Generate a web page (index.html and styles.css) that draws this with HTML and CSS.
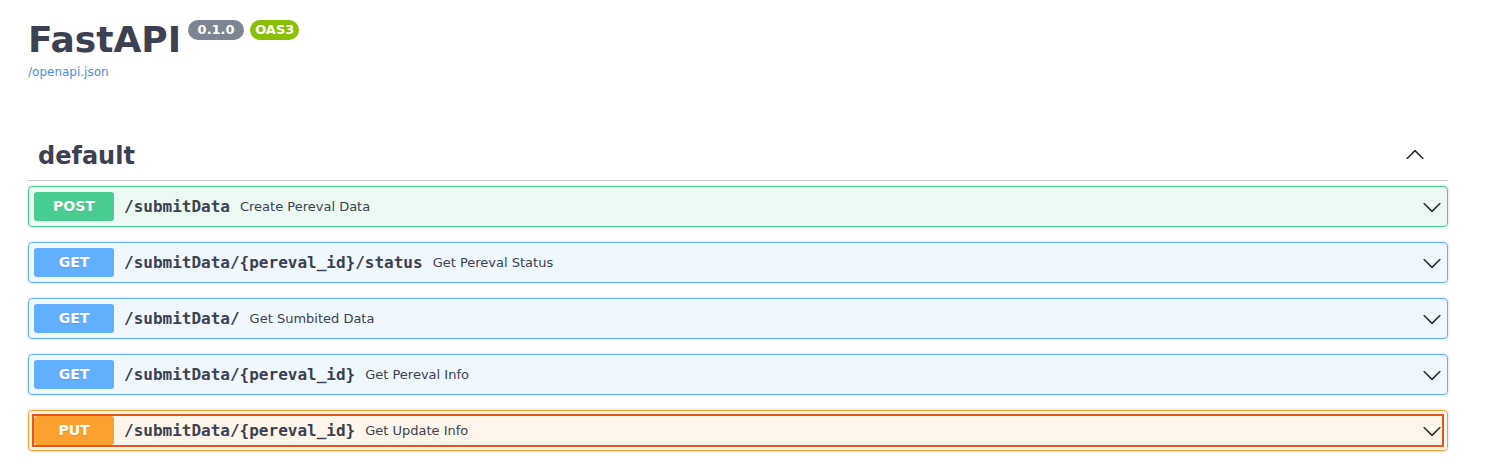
FILE: index.html
```html
<!DOCTYPE html>
<html lang="en">
<head>
<meta charset="utf-8">
<title>FastAPI - Swagger UI</title>
<link rel="stylesheet" href="styles.css">
</head>
<body>
<div class="wrapper">
  <div class="info">
    <h2 class="title">FastAPI<small class="ver"><pre> 0.1.0 </pre></small><small class="oas"><pre>OAS3</pre></small></h2>
    <a class="link" href="#">/openapi.json</a>
  </div>

  <div class="tag-section">
    <h3 class="tag">
      <span class="tag-name">default</span>
      <button class="expand" aria-label="collapse">
        <svg width="20" height="20" viewBox="0 0 20 20"><path d="M17.418 14.908c.272.268.709.268.979 0s.271-.701 0-.969l-7.908-7.83c-.27-.268-.707-.268-.979 0l-7.908 7.83c-.27.268-.27.701 0 .969.271.268.709.268.979 0L10 7.767l7.418 7.141z" fill="#222"/></svg>
      </button>
    </h3>

    <div class="opblock post">
      <div class="summary">
        <button class="control">
          <span class="method">POST</span>
          <span class="path">/submitData</span>
          <span class="desc">Create Pereval Data</span>
          <svg class="arrow" width="20" height="20" viewBox="0 0 20 20"><path d="M17.418 6.109c.272-.268.709-.268.979 0s.271.701 0 .969l-7.908 7.83c-.27.268-.707.268-.979 0l-7.908-7.83c-.27-.268-.27-.701 0-.969.271-.268.709-.268.979 0L10 13.25l7.418-7.141z" fill="#222"/></svg>
        </button>
      </div>
    </div>

    <div class="opblock get">
      <div class="summary">
        <button class="control">
          <span class="method">GET</span>
          <span class="path">/submitData/{pereval_id}/status</span>
          <span class="desc">Get Pereval Status</span>
          <svg class="arrow" width="20" height="20" viewBox="0 0 20 20"><path d="M17.418 6.109c.272-.268.709-.268.979 0s.271.701 0 .969l-7.908 7.83c-.27.268-.707.268-.979 0l-7.908-7.830c-.27-.268-.27-.701 0-.969.271-.268.709-.268.979 0L10 13.25l7.418-7.141z" fill="#222"/></svg>
        </button>
      </div>
    </div>

    <div class="opblock get">
      <div class="summary">
        <button class="control">
          <span class="method">GET</span>
          <span class="path">/submitData/</span>
          <span class="desc">Get Sumbited Data</span>
          <svg class="arrow" width="20" height="20" viewBox="0 0 20 20"><path d="M17.418 6.109c.272-.268.709-.268.979 0s.271.701 0 .969l-7.908 7.83c-.27.268-.707.268-.979 0l-7.908-7.83c-.27-.268-.27-.701 0-.969.271-.268.709-.268.979 0L10 13.25l7.418-7.141z" fill="#222"/></svg>
        </button>
      </div>
    </div>

    <div class="opblock get">
      <div class="summary">
        <button class="control">
          <span class="method">GET</span>
          <span class="path">/submitData/{pereval_id}</span>
          <span class="desc">Get Pereval Info</span>
          <svg class="arrow" width="20" height="20" viewBox="0 0 20 20"><path d="M17.418 6.109c.272-.268.709-.268.979 0s.271.701 0 .969l-7.908 7.83c-.27.268-.707.268-.979 0l-7.908-7.83c-.27-.268-.27-.701 0-.969.271-.268.709-.268.979 0L10 13.25l7.418-7.141z" fill="#222"/></svg>
        </button>
      </div>
    </div>

    <div class="opblock put">
      <div class="summary">
        <button class="control focused">
          <span class="method">PUT</span>
          <span class="path">/submitData/{pereval_id}</span>
          <span class="desc">Get Update Info</span>
          <svg class="arrow" width="20" height="20" viewBox="0 0 20 20"><path d="M17.418 6.109c.272-.268.709-.268.979 0s.271.701 0 .969l-7.908 7.83c-.27.268-.707.268-.979 0l-7.908-7.83c-.27-.268-.27-.701 0-.969.271-.268.709-.268.979 0L10 13.25l7.418-7.141z" fill="#222"/></svg>
        </button>
      </div>
    </div>
  </div>
</div>
</body>
</html>
```

FILE: styles.css
```css
html, body {
  margin: 0;
  padding: 0;
  background: #fff;
}

body {
  font-family: "DejaVu Sans", sans-serif;
  color: #3b4151;
}

.wrapper {
  width: 1420px;
  padding: 19px 0 0 28px;
}

.info {
  display: flex;
  flex-direction: column;
  align-items: flex-start;
}

.title {
  display: flex;
  align-items: flex-start;
  margin: 0;
  font-size: 36px;
  line-height: 42px;
  font-weight: 700;
  color: #3b4151;
}

.title small {
  display: block;
  margin-top: 1px;
  padding: 2px 5px;
  border-radius: 57px;
  background: #7d8492;
}

.title small.ver {
  margin-left: 7px;
}

.title small.oas {
  margin-left: 6px;
  background: #89bf04;
}

.title small pre {
  margin: 0;
  padding: 0;
  font-family: "DejaVu Sans", sans-serif;
  font-size: 13px;
  line-height: 16px;
  font-weight: 700;
  color: #fff;
}

.link {
  margin-top: 4px;
  font-size: 12px;
  line-height: 14px;
  color: #4990e2;
  text-decoration: none;
}

.tag-section {
  margin-top: 53px;
}

.tag {
  display: flex;
  align-items: center;
  margin: 0 0 5px;
  padding: 10px 20px 10px 10px;
  border-bottom: 1px solid rgba(59, 65, 81, 0.3);
  font-size: 24px;
  line-height: 28px;
  font-weight: 700;
  color: #3b4151;
}

.tag-name {
  flex: 1;
}

.expand {
  display: flex;
  margin: 0 3px 5px 0;
  padding: 0;
  border: none;
  background: none;
}

.opblock {
  margin: 0 0 15px;
  border: 1px solid #000;
  border-radius: 4px;
  box-shadow: 0 0 3px rgba(0, 0, 0, 0.19);
}

.summary {
  display: flex;
  padding: 5px;
}

.control {
  display: flex;
  align-items: center;
  flex: 1;
  margin: 0;
  padding: 0;
  border: none;
  background: none;
  font: inherit;
  color: inherit;
  text-align: left;
}

.control.focused {
  outline: 2px solid #e6561d;
  outline-offset: 0;
}

.method {
  flex-shrink: 0;
  min-width: 80px;
  padding: 6px 0;
  border-radius: 3px;
  font-family: "DejaVu Sans", sans-serif;
  font-size: 14px;
  line-height: 17px;
  font-weight: 700;
  color: #fff;
  text-align: center;
  text-shadow: 0 1px 0 rgba(0, 0, 0, 0.1);
}

.path {
  padding: 0 10px;
  font-family: "DejaVu Sans Mono", monospace;
  font-size: 16px;
  font-weight: 700;
  color: #3b4151;
}

.desc {
  flex: 1;
  font-size: 13px;
  color: #3b4151;
}

.arrow {
  flex-shrink: 0;
}

.post {
  border-color: #49cc90;
  background: rgba(73, 204, 144, 0.1);
}
.post .method {
  background: #49cc90;
}

.get {
  border-color: #61affe;
  background: rgba(97, 175, 254, 0.1);
}
.get .method {
  background: #61affe;
}

.put {
  border-color: #fca130;
  background: rgba(252, 161, 48, 0.1);
}
.put .method {
  background: #fca130;
}
```
